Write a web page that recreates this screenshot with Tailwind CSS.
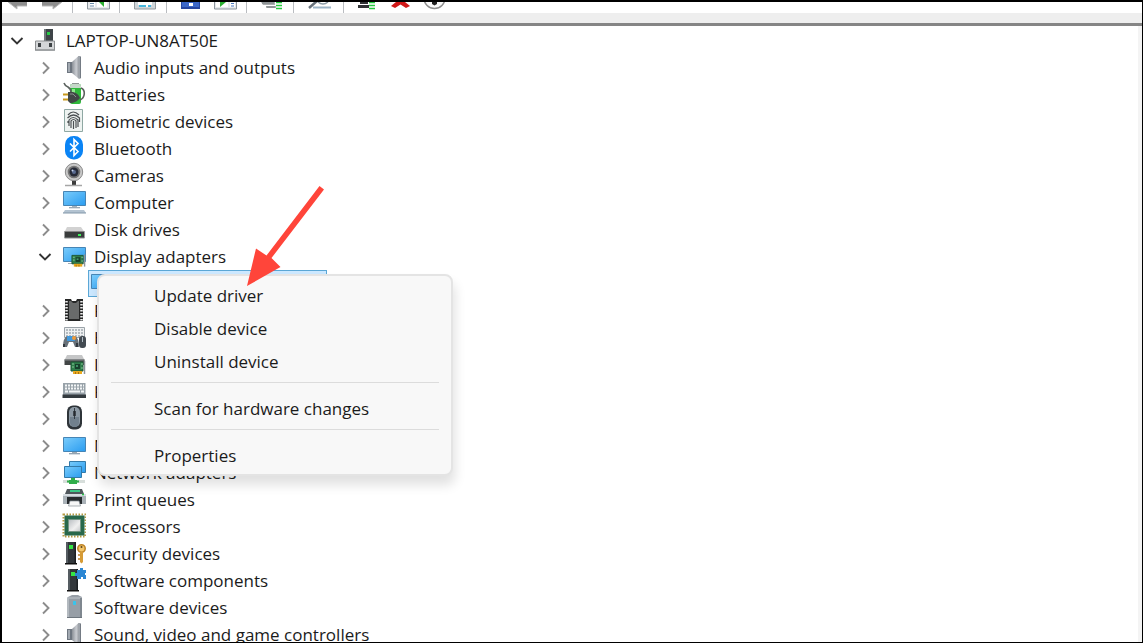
<!DOCTYPE html>
<html lang="en">
<head>
<meta charset="utf-8">
<meta name="viewport" content="width=device-width, initial-scale=1">
<title>Device Manager</title>
<script src="https://cdn.jsdelivr.net/npm/@tailwindcss/browser@4"></script>
</head>
<body class="bg-black font-['Open_Sans','Noto_Sans',sans-serif] text-[17px] text-[#1b1b1b]">

<!-- Shared shapes -->
<svg class="absolute size-0" aria-hidden="true">
  <defs>
    <linearGradient id="sky" x1="0" y1="0" x2="1" y2="1"><stop offset="0" stop-color="#7accfb"/><stop offset="1" stop-color="#2a9cf0"/></linearGradient>
    <linearGradient id="steel" x1="0" y1="0" x2="1" y2="0"><stop offset="0" stop-color="#8b9097"/><stop offset=".5" stop-color="#c9ccd1"/><stop offset="1" stop-color="#7d8188"/></linearGradient>
    <linearGradient id="silver" x1="0" y1="0" x2="1" y2="1"><stop offset="0" stop-color="#b7bcc0"/><stop offset=".6" stop-color="#f0f0f0"/><stop offset="1" stop-color="#c2c6c8"/></linearGradient>
    <symbol id="closed" viewBox="0 0 14 27"><path d="M5 8.500 10.500 14 5 19.500" fill="none" stroke="#8c8c8c" stroke-width="1.900"/></symbol>
    <symbol id="open" viewBox="0 0 14 27"><path d="M1.500 11 7 16.500 12.500 11" fill="none" stroke="#333" stroke-width="1.900"/></symbol>
    <symbol id="speaker" viewBox="0 0 24 27">
      <path d="M5 8h5v11H5z" fill="#6e7680"/><path d="M6 9h2v9H6z" fill="#a2a9b1"/>
      <path d="M10 8 16.500 2h2v22.500h-2L10 19z" fill="url(#steel)"/><path d="M16.500 2h2v22.500h-2z" fill="#9ea4ab"/><path d="M18.500 3v21" stroke="#747b84"/>
    </symbol>
    <symbol id="card" viewBox="0 0 16 14">
      <path d="M1 1h12v9H1z" fill="#2f7d4b" stroke="#1d5834"/><path d="M5 3h5v5H5z" fill="#173f2b"/><path d="M2 3h2M2 6h2M11 3h2M11 7h2" stroke="#83c895"/><path d="M6 5h2" stroke="#69dfa0"/>
      <path d="M3 10h9v3H3z" fill="#e9a91e"/><path d="M5.500 11v2M8.500 11v2" stroke="#a97312"/><path d="M14.500 0v13" stroke="#8d9498" stroke-width="1.500"/>
    </symbol>
    <symbol id="tower" viewBox="0 0 13 24">
      <path d="M1 1h10v21H1z" fill="#32373b"/><path d="M1 1h2v21H1z" fill="#555c61"/><path d="M9.500 1H11v21H9.500z" fill="#1c2023"/><path d="M4 4h4v4H4z" fill="#35e443"/><path d="M0 22h12v1.500H0z" fill="#111"/>
    </symbol>
  </defs>
</svg>

<div class="flex h-screen flex-col overflow-hidden border-t-2 border-r border-b border-l-2 border-black bg-white">

  <header class="shrink-0 border-b-[3px] border-[#858585] bg-[#eeeeee] pb-[10px]">
    <div role="toolbar" aria-label="Device Manager" class="flex h-[11px] items-stretch overflow-hidden bg-white pl-1">
      <button type="button" aria-label="Back" class="w-6"><svg class="block" width="24" height="11" viewBox="0 0 24 11"><path d="M2 0 11 7V4h10V0z" fill="#8e8e8e"/><path d="M2 0 11 7V4h10" fill="none" stroke="#b8b8b8"/></svg></button>
      <button type="button" aria-label="Forward" class="ml-[10px] w-6"><svg class="block" width="24" height="11" viewBox="0 0 24 11"><path d="M2 0v4h11v3l9-7z" fill="#8e8e8e"/><path d="M2 4h11v3l9-7" fill="none" stroke="#b8b8b8"/></svg></button>
      <span class="mr-[14px] ml-2 w-px bg-[#b9bcc0]"></span>
      <button type="button" aria-label="Show console tree" class="w-6"><svg class="block" width="24" height="11" viewBox="0 0 24 11"><path d="M.5-2h22v9H.5z" fill="#e6e9ec" stroke="#8b949c"/><path d="M3 0h5v5H3z" fill="#fff"/><path d="M3 1.500h4M3 4h4" stroke="#688aa8"/><path d="M10-1h10v6H10z" fill="#fff"/><path d="M12 0h5v5z" fill="#29ae30"/></svg></button>
      <span class="mr-[14px] ml-2 w-px bg-[#b9bcc0]"></span>
      <button type="button" aria-label="Properties" class="w-6"><svg class="block" width="24" height="11" viewBox="0 0 24 11"><path d="M.5-2h21v9H.5z" fill="#cfd5d9" stroke="#929a9f"/><path d="M4-1h14v4H4z" fill="#fff"/><path d="M5 3h12v2H5z" fill="#46b6dc"/><path d="M12 3h2v2h-2z" fill="#fff"/></svg></button>
      <span class="mr-[14px] ml-2 w-px bg-[#b9bcc0]"></span>
      <button type="button" aria-label="Help" class="w-6"><svg class="block" width="24" height="11" viewBox="0 0 24 11"><path d="M0-2h19v9H0z" fill="#2646a0"/><path d="M1-1h17v6H1z" fill="#3b67c8"/><path d="M8 1h4v3H8z" fill="#fff"/></svg></button>
      <button type="button" aria-label="Show action pane" class="ml-[9px] w-6"><svg class="block" width="24" height="11" viewBox="0 0 24 11"><path d="M.5-2h22v9H.5z" fill="#e6e9ec" stroke="#8b949c"/><path d="M2-1h12v6H2z" fill="#fff"/><path d="M6 0h6L6 5z" fill="#29ae30"/><path d="M16-1h5v6h-5z" fill="#fff"/><path d="M17 1.500h3M17 4h3" stroke="#4d7bc0"/></svg></button>
      <span class="mr-[14px] ml-2 w-px bg-[#b9bcc0]"></span>
      <button type="button" aria-label="Update device driver" class="w-6"><svg class="block" width="24" height="11" viewBox="0 0 24 11"><path d="M0 0h14v3H2zM5 4h10v2H6z" fill="#a9adaf"/><path d="M1 1h12M5 5h9" stroke="#747a7d"/><path d="M15 .5h6M15 3.500h6M15 6.500h6" stroke="#26c83e" stroke-width="1.700"/></svg></button>
      <span class="mr-[14px] ml-2 w-px bg-[#b9bcc0]"></span>
      <button type="button" aria-label="Scan for hardware changes" class="w-[27px]"><svg class="block" width="27" height="11" viewBox="0 0 27 11"><path d="M5 5.500h18" stroke="#9cb4c6" stroke-width="2"/><path d="M1 6 9-1" stroke="#67717a" stroke-width="2.500"/><path d="M10 0q5 4 10 0" fill="none" stroke="#8c9ba6" stroke-width="1.500"/></svg></button>
      <span class="mr-[14px] ml-2 w-px bg-[#b9bcc0]"></span>
      <button type="button" aria-label="Enable device" class="w-6"><svg class="block" width="24" height="11" viewBox="0 0 24 11"><path d="M2 0h8v2H2zM0 3h11v3H0z" fill="#2f3234"/><path d="M11 .5h6M11 3.500h6M11 6.500h6" stroke="#26c83e" stroke-width="1.700"/></svg></button>
      <button type="button" aria-label="Uninstall device" class="ml-[9px] w-6"><svg class="block" width="24" height="11" viewBox="0 0 24 11"><path d="m0 4 5-4h9l5 4-4 2-5.500-3.500L4 6z" fill="#cf1717"/></svg></button>
      <button type="button" aria-label="Disable device" class="ml-[9px] w-6"><svg class="block" width="24" height="11" viewBox="0 0 24 11"><circle cx="10.500" cy="-4" r="10.500" fill="#fafafa" stroke="#8d8d8d" stroke-width="1.500"/><path d="M8-1h5v3l-2.500 1.500L8 2z" fill="#222"/></svg></button>
    </div>
  </header>

  <main class="relative min-h-0 flex-1 overflow-hidden border-r-4 border-[#f4f4f4] pl-2 pt-px">
    <ul role="tree" aria-label="Devices">
      <li role="treeitem" aria-expanded="true">
        <div class="flex h-[27px] items-center">
          <button type="button" aria-label="Collapse LAPTOP-UN8AT50E" class="mr-[10px]"><svg class="block" width="14" height="27"><use href="#open"/></svg></button>
          <svg class="mr-2" width="24" height="27" viewBox="0 0 24 27"><path d="M10 2h9v13h-9z" fill="#3e4448"/><path d="M10 2h2v13h-2z" fill="#70777b"/><path d="M13 5h3v3h-3z" fill="#29ca47"/><path d="M1.500 14h19v9.500h-19z" fill="#d4d6d8" stroke="#8b8e90"/><path d="M2 22h18v2H2z" fill="#a0a3a5"/><path d="M4 16h3v4H4zM15 16h3v4h-3z" fill="#3d4245"/></svg>
          <span>LAPTOP-UN8AT50E</span>
        </div>
        <ul role="group" class="pl-7">
          <li role="treeitem" aria-expanded="false" class="flex h-[27px] items-center">
            <button type="button" aria-label="Expand Audio inputs and outputs" class="mr-[10px]"><svg class="block" width="14" height="27"><use href="#closed"/></svg></button>
            <svg class="mr-2" width="24" height="27"><use href="#speaker"/></svg>
            <span>Audio inputs and outputs</span>
          </li>
          <li role="treeitem" aria-expanded="false" class="flex h-[27px] items-center">
            <button type="button" aria-label="Expand Batteries" class="mr-[10px]"><svg class="block" width="14" height="27"><use href="#closed"/></svg></button>
            <svg class="mr-2" width="24" height="27" viewBox="0 0 24 27"><path d="M10 2h7v2h-7z" fill="#8e9591"/><rect x="8" y="3" width="11" height="20" rx="2" fill="#2fb83b"/><path d="M8 5q0-2 2-2h7q2 0 2 2v2H8z" fill="#c5d8c8"/><path d="M10 8h3v6h-3z" fill="#8ee88d"/><path d="M2 2q1 3 4 4 3 2 3 5M18 19c5-2 6-10 1-12" fill="none" stroke="#5b625e" stroke-width="1.600"/><path d="M1 13.500h7M1 18.500h7" stroke="#c8991e" stroke-width="2"/><path d="M6 11h5q5 1 7 6-3 4-8 5H8l-2-2z" fill="#414746"/><path d="M8 13h3l3 3" stroke="#8b918f" fill="none"/></svg>
            <span>Batteries</span>
          </li>
          <li role="treeitem" aria-expanded="false" class="flex h-[27px] items-center">
            <button type="button" aria-label="Expand Biometric devices" class="mr-[10px]"><svg class="block" width="14" height="27"><use href="#closed"/></svg></button>
            <svg class="mr-2" width="24" height="27" viewBox="0 0 24 27"><path d="M2.500 1.500h18v22h-18z" fill="#eef3f1" stroke="#8fa8a3"/><g fill="none" stroke="#4b5052" stroke-width="1.200"><path d="M6 7q5-6 11 0M5.500 10q6-6 12 0v4M7 18v-6q4-5 9 0v5M9 20v-7q2.500-3 5 0v7M11.500 21v-8M16 19v-2M6 13v2"/></g></svg>
            <span>Biometric devices</span>
          </li>
          <li role="treeitem" aria-expanded="false" class="flex h-[27px] items-center">
            <button type="button" aria-label="Expand Bluetooth" class="mr-[10px]"><svg class="block" width="14" height="27"><use href="#closed"/></svg></button>
            <svg class="mr-2" width="24" height="27" viewBox="0 0 24 27"><rect x="3" y="1" width="18" height="23.500" rx="8.500" fill="#0a84f5"/><path d="m8 8.500 8 8-4 4v-16l4 4-8 8" fill="none" stroke="#fff" stroke-width="1.600"/></svg>
            <span>Bluetooth</span>
          </li>
          <li role="treeitem" aria-expanded="false" class="flex h-[27px] items-center">
            <button type="button" aria-label="Expand Cameras" class="mr-[10px]"><svg class="block" width="14" height="27"><use href="#closed"/></svg></button>
            <svg class="mr-2" width="24" height="27" viewBox="0 0 24 27"><path d="M10 19h4v4h-4z" fill="#3b3b3b"/><path d="M3 23.500h17" stroke="#a6a6a6" stroke-width="1.500"/><circle cx="12" cy="10" r="8.700" fill="#c9c9c9" stroke="#8a8a8a"/><circle cx="12" cy="10" r="6.300" fill="#777"/><circle cx="12" cy="10" r="4.500" fill="#272b38"/><circle cx="12" cy="10" r="2" fill="#596b91"/><circle cx="10.500" cy="8.500" r="1" fill="#c8d6ef"/></svg>
            <span>Cameras</span>
          </li>
          <li role="treeitem" aria-expanded="false" class="flex h-[27px] items-center">
            <button type="button" aria-label="Expand Computer" class="mr-[10px]"><svg class="block" width="14" height="27"><use href="#closed"/></svg></button>
            <svg class="mr-2" width="24" height="27" viewBox="0 0 24 27"><path d="M1.500 2.500h22v14h-22z" fill="url(#sky)" stroke="#4685b5"/><path d="M10 17h5v1h-5z" fill="#a6b3bc"/><path d="M7 18.700h11" stroke="#8fa0ae" stroke-width="1.200"/><path d="M3 21h19l2 3H1z" fill="#b3c3d1"/><path d="M1 24h23" stroke="#8297a9"/></svg>
            <span>Computer</span>
          </li>
          <li role="treeitem" aria-expanded="false" class="flex h-[27px] items-center">
            <button type="button" aria-label="Expand Disk drives" class="mr-[10px]"><svg class="block" width="14" height="27"><use href="#closed"/></svg></button>
            <svg class="mr-2" width="24" height="27" viewBox="0 0 24 27"><path d="m5 11-2.500 5h20L19 11z" fill="#d2d2d2"/><path d="M2.500 15.500h20V22h-20z" fill="#393c3c"/><path d="M2.500 15.500h20" stroke="#888"/><path d="M2.500 22h20" stroke="#8b8e8e"/><path d="M16 18h3v2h-3z" fill="#3df057"/></svg>
            <span>Disk drives</span>
          </li>
          <li role="treeitem" aria-expanded="true">
            <div class="flex h-[27px] items-center">
              <button type="button" aria-label="Collapse Display adapters" class="mr-[10px]"><svg class="block" width="14" height="27"><use href="#open"/></svg></button>
              <svg class="mr-2" width="24" height="27" viewBox="0 0 24 27"><path d="M1.500 4.500h22v14h-22z" fill="url(#sky)" stroke="#4685b5"/><path d="M6 20.500h6" stroke="#9daab3"/><use href="#card" x="9" y="11" width="15" height="14"/></svg>
              <span>Display adapters</span>
            </div>
            <ul role="group" class="pl-[50px]">
              <li role="treeitem" aria-selected="true" aria-label="Display adapter" class="flex h-[27px] w-[239px] items-center border border-[#5ba7d6] bg-[#cce8ff] pl-0.5">
                <svg width="24" height="25" viewBox="0 0 24 25"><path d="M.5 3.500h22v14H.500z" fill="url(#sky)" stroke="#4685b5"/></svg>
              </li>
            </ul>
          </li>
          <li role="treeitem" aria-expanded="false" class="flex h-[27px] items-center">
            <button type="button" aria-label="Expand Firmware" class="mr-[10px]"><svg class="block" width="14" height="27"><use href="#closed"/></svg></button>
            <svg class="mr-2" width="24" height="27" viewBox="0 0 24 27"><path d="M3 2h6l1 2h4l1-2h6v22H3z" fill="#262727"/><path d="M7 4h2l2 2h3l2-2h1v18H7z" fill="#696b6b"/><path d="M4.500 4v20M19.500 4v20" stroke="#eee" stroke-width="2.500" stroke-dasharray="1.500 1.500"/></svg>
            <span>Firmware</span>
          </li>
          <li role="treeitem" aria-expanded="false" class="flex h-[27px] items-center">
            <button type="button" aria-label="Expand Human Interface Devices" class="mr-[10px]"><svg class="block" width="14" height="27"><use href="#closed"/></svg></button>
            <svg class="mr-2" width="24" height="27" viewBox="0 0 24 27"><path d="M2.500 3.500h20v10h-20z" fill="#eef0f1" stroke="#9ba3a9"/><path d="M4 6h17M4 9h17M4 12h17" stroke="#a3abb1" stroke-width="1.300" stroke-dasharray="2 1"/><path d="M1 23q0-9 4-11h8q4 2 4 11h-4l-2-5H7l-2 5z" fill="#687179"/><path d="M5 12h7l1 5H5z" fill="#4298db"/><circle cx="12" cy="14" r="2" fill="#f29b37"/><path d="M2 20v3M15 19v4" stroke="#333940" stroke-width="2"/><rect x="17" y="12" width="7" height="12" rx="3" fill="#434b52"/><path d="M20.500 13v5" stroke="#b1bdc6"/></svg>
            <span>Human Interface Devices</span>
          </li>
          <li role="treeitem" aria-expanded="false" class="flex h-[27px] items-center">
            <button type="button" aria-label="Expand IDE ATA/ATAPI controllers" class="mr-[10px]"><svg class="block" width="14" height="27"><use href="#closed"/></svg></button>
            <svg class="mr-2" width="24" height="27" viewBox="0 0 24 27"><path d="m5 4-2.500 5h20L20 4z" fill="#c5c6c7"/><path d="M2.500 8.500h20V14h-20z" fill="#424546"/><path d="M2.500 9h20" stroke="#85898b"/><use href="#card" x="8" y="10" width="16" height="14"/></svg>
            <span>IDE ATA/ATAPI controllers</span>
          </li>
          <li role="treeitem" aria-expanded="false" class="flex h-[27px] items-center">
            <button type="button" aria-label="Expand Keyboards" class="mr-[10px]"><svg class="block" width="14" height="27"><use href="#closed"/></svg></button>
            <svg class="mr-2" width="24" height="27" viewBox="0 0 24 27"><path d="M1 5h22.500v14H1z" fill="#98a2a9"/><path d="M3 7.500h19M3 10.500h19" stroke="#f3f6f7" stroke-width="1.800" stroke-dasharray="2 1"/><path d="M3 13.500h3m1 0h11m1 0h3" stroke="#f3f6f7" stroke-width="1.800"/><path d="M.5 16.500h23.500V20H.5z" fill="#343b40"/></svg>
            <span>Keyboards</span>
          </li>
          <li role="treeitem" aria-expanded="false" class="flex h-[27px] items-center">
            <button type="button" aria-label="Expand Mice and other pointing devices" class="mr-[10px]"><svg class="block" width="14" height="27"><use href="#closed"/></svg></button>
            <svg class="mr-2" width="24" height="27" viewBox="0 0 24 27"><rect x="5" y="0.500" width="15" height="24" rx="6" fill="#2e3439"/><rect x="7" y="2" width="11" height="20" rx="5" fill="#8c99a4"/><path d="M8 12h9v6q-1 4-4.500 4T8 18z" fill="#71808d"/><path d="M12.500 3v11" stroke="#333b42"/><path d="M12.500 6v5" stroke="#262b30" stroke-width="2.500"/></svg>
            <span>Mice and other pointing devices</span>
          </li>
          <li role="treeitem" aria-expanded="false" class="flex h-[27px] items-center">
            <button type="button" aria-label="Expand Monitors" class="mr-[10px]"><svg class="block" width="14" height="27"><use href="#closed"/></svg></button>
            <svg class="mr-2" width="24" height="27" viewBox="0 0 24 27"><path d="M1.500 5.500h22v14h-22z" fill="url(#sky)" stroke="#4685b5"/><path d="M10 20h5v1h-5z" fill="#9daab3"/><path d="M7 21.700h11" stroke="#8fa0ae" stroke-width="1.300"/></svg>
            <span>Monitors</span>
          </li>
          <li role="treeitem" aria-expanded="false" class="flex h-[27px] items-center">
            <button type="button" aria-label="Expand Network adapters" class="mr-[10px]"><svg class="block" width="14" height="27"><use href="#closed"/></svg></button>
            <svg class="mr-2" width="24" height="27" viewBox="0 0 24 27"><path d="M7.500 2.500h16v11h-16z" fill="url(#sky)" stroke="#337aa9"/><path d="M2.500 7.500h17v11h-17z" fill="url(#sky)" stroke="#337aa9"/><path d="M1 21h22v3H1z" fill="#d7dedb"/><path d="M9 19h4v2h2v4H7v-4h2z" fill="#31ae4b"/><path d="M5 22.500h12" stroke="#31ae4b" stroke-width="2"/></svg>
            <span>Network adapters</span>
          </li>
          <li role="treeitem" aria-expanded="false" class="flex h-[27px] items-center">
            <button type="button" aria-label="Expand Print queues" class="mr-[10px]"><svg class="block" width="14" height="27"><use href="#closed"/></svg></button>
            <svg class="mr-2" width="24" height="27" viewBox="0 0 24 27"><path d="m5 3-2 5h19l-2-5z" fill="#50575c"/><path d="M8 4h10v2H8z" fill="#3bc886"/><path d="M1 8h23v10H1z" fill="#aab2b8"/><path d="M1 8h23v2H1z" fill="#d6dce1"/><path d="M5 11h15v7H5z" fill="#272b2e"/><path d="m8 15-1.500 5h12L17 15z" fill="#f7f7f7" stroke="#889097" stroke-width=".7"/><path d="M20 8.500h2" stroke="#29c747" stroke-width="1.500"/></svg>
            <span>Print queues</span>
          </li>
          <li role="treeitem" aria-expanded="false" class="flex h-[27px] items-center">
            <button type="button" aria-label="Expand Processors" class="mr-[10px]"><svg class="block" width="14" height="27"><use href="#closed"/></svg></button>
            <svg class="mr-2" width="24" height="27" viewBox="0 0 24 27"><rect x="1.500" y="1.500" width="22" height="22" fill="none" stroke="#b59a42" stroke-width="2" stroke-dasharray="1.500 1.500"/><path d="M2.500 2.500h20v20h-20z" fill="#28684b"/><path d="M6.500 6.500h12v12h-12z" fill="url(#silver)" stroke="#739482"/></svg>
            <span>Processors</span>
          </li>
          <li role="treeitem" aria-expanded="false" class="flex h-[27px] items-center">
            <button type="button" aria-label="Expand Security devices" class="mr-[10px]"><svg class="block" width="14" height="27"><use href="#closed"/></svg></button>
            <svg class="mr-2" width="24" height="27" viewBox="0 0 24 27"><use href="#tower" x="3" y="1" width="13" height="24"/><circle cx="19.500" cy="8.500" r="3.700" fill="#f3c56a" stroke="#bf8528" stroke-width="1.600"/><circle cx="19.500" cy="7" r="1" fill="#5c451f"/><path d="M18 12h3v10l-1.500 1.500L18 22z" fill="#d69b36"/><path d="M18 15h-2M18 19h-2" stroke="#bd8126" stroke-width="1.500"/></svg>
            <span>Security devices</span>
          </li>
          <li role="treeitem" aria-expanded="false" class="flex h-[27px] items-center">
            <button type="button" aria-label="Expand Software components" class="mr-[10px]"><svg class="block" width="14" height="27"><use href="#closed"/></svg></button>
            <svg class="mr-2" width="24" height="27" viewBox="0 0 24 27"><use href="#tower" x="5" y="1" width="13" height="24"/><path d="M15 3h3V1h3v2h3v3h-1v2h1v4h-3v-2h-2v2h-4V9h-2V6h2z" fill="#2c87d3"/></svg>
            <span>Software components</span>
          </li>
          <li role="treeitem" aria-expanded="false" class="flex h-[27px] items-center">
            <button type="button" aria-label="Expand Software devices" class="mr-[10px]"><svg class="block" width="14" height="27"><use href="#closed"/></svg></button>
            <svg class="mr-2" width="24" height="27" viewBox="0 0 24 27"><path d="m6 3 4-2h6l4 2v21H5V4z" fill="#979ea6"/><path d="M5 4h15" stroke="#bfc5ca"/><path d="M5 4h2v20H5z" fill="#b3b9bf"/><path d="M18 4h2v20h-2z" fill="#7f878f"/><path d="M11 7h3v4h-3z" fill="#3bc3ea"/><path d="M5 23.500h15" stroke="#6d757d"/></svg>
            <span>Software devices</span>
          </li>
          <li role="treeitem" aria-expanded="false" class="flex h-[27px] items-center">
            <button type="button" aria-label="Expand Sound, video and game controllers" class="mr-[10px]"><svg class="block" width="14" height="27"><use href="#closed"/></svg></button>
            <svg class="mr-2" width="24" height="27"><use href="#speaker"/></svg>
            <span>Sound, video and game controllers</span>
          </li>
        </ul>
      </li>
    </ul>

    <!-- Context menu of the selected adapter -->
    <div role="menu" aria-label="Device actions" class="absolute top-[248px] left-[95px] flex w-[356px] flex-col rounded-lg border-2 border-[#e4e4e4] bg-[#f8f8f8] pt-[3px] pb-0.5 shadow-[2px_9px_12px_rgba(0,0,0,0.12)]">
      <button type="button" role="menuitem" class="h-[33px] pl-[55px] text-left">Update driver</button>
      <button type="button" role="menuitem" class="h-[33px] pl-[55px] text-left">Disable device</button>
      <button type="button" role="menuitem" class="h-[33px] pl-[55px] text-left">Uninstall device</button>
      <hr class="mx-3 mt-1 mb-[9px] border-[#dcdcdc]">
      <button type="button" role="menuitem" class="h-[33px] pl-[55px] text-left">Scan for hardware changes</button>
      <hr class="mx-3 mt-1 mb-[9px] border-[#dcdcdc]">
      <button type="button" role="menuitem" class="h-[33px] pl-[55px] text-left">Properties</button>
    </div>

    <!-- Arrow that points at "Update driver" -->
    <svg class="absolute top-[158px] left-[243px]" width="84" height="104" viewBox="0 0 84 104" aria-hidden="true"><path d="m74.500 2 4.500 3.500-52.500 68.500L35.500 83 2 102 11 64.500l10.500 7z" fill="#ff453a"/></svg>
  </main>
</div>
</body>
</html>
